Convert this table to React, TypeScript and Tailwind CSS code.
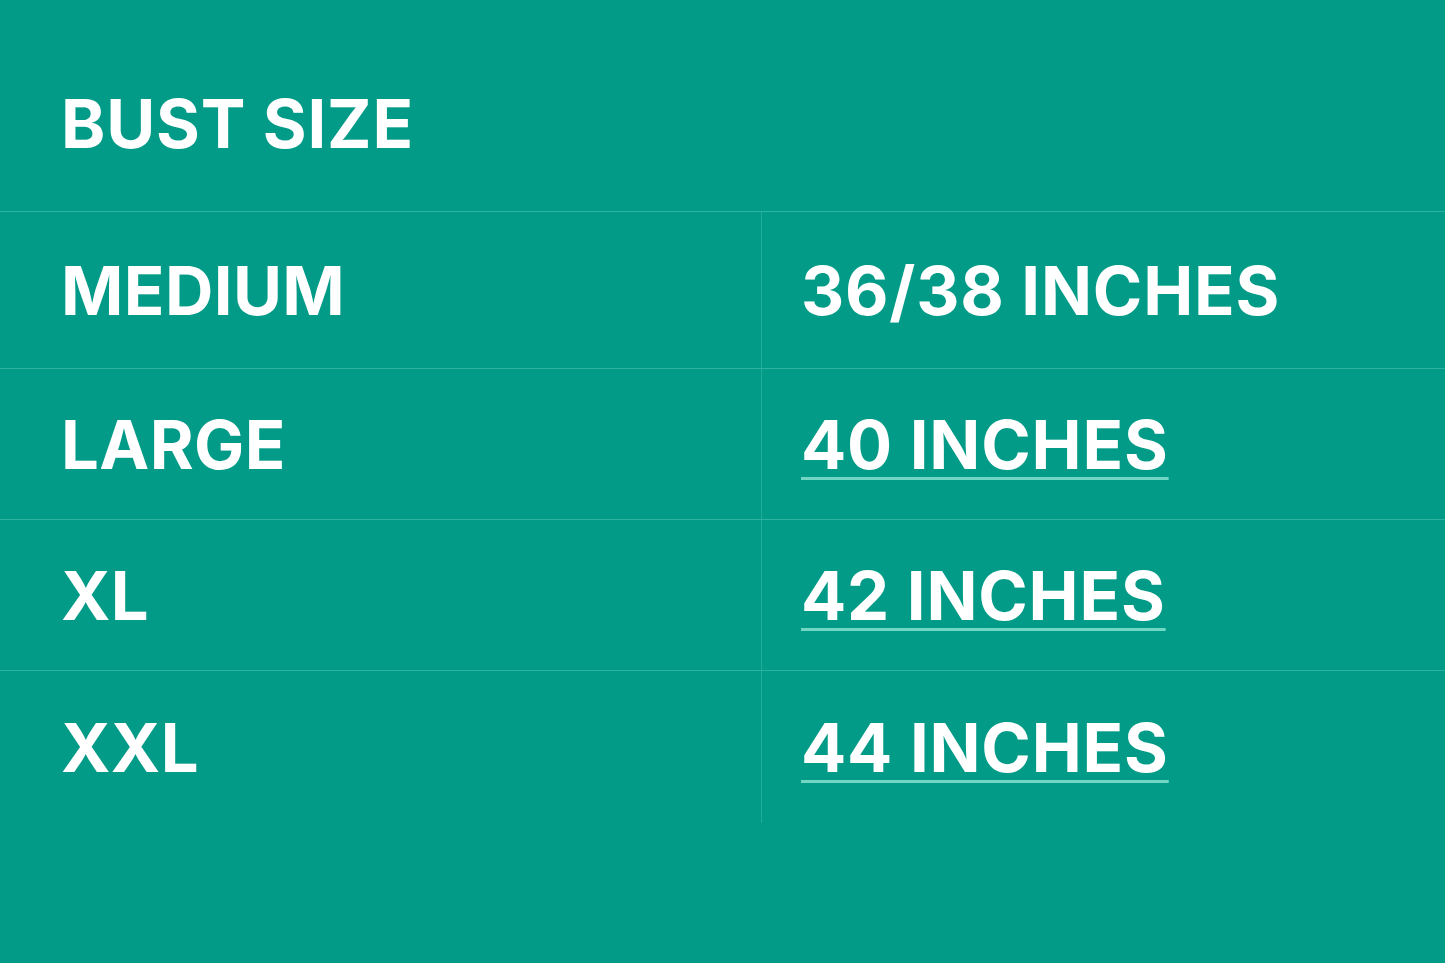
import React from "react";

const rows = [
  { size: "MEDIUM", bust: "36/38 INCHES", link: false, h: "h-[157px]" },
  { size: "LARGE", bust: "40 INCHES", link: true, h: "h-[151px]" },
  { size: "XL", bust: "42 INCHES", link: true, h: "h-[151px]" },
  { size: "XXL", bust: "44 INCHES", link: true, h: "h-[152px]" },
];

const App = () => {
  return (
    <div className="w-[1445px] h-[963px] bg-[#029b87] text-white font-['Inter','Liberation_Sans',sans-serif] font-bold overflow-hidden">
      {/* Title */}
      <div className="h-[211px] flex items-center pl-[61px] pt-[36px]">
        <h1 className="text-[67px] leading-none tracking-[0.8px]">BUST SIZE</h1>
      </div>

      {/* Table */}
      <div className="border-t border-[#2db39f]">
        {rows.map((row, i) => (
          <div
            key={row.size}
            className={`flex ${row.h} ${i < rows.length - 1 ? "border-b border-[#2db39f]" : ""}`}
          >
            <div className="w-[762px] flex items-center pl-[61px] border-r border-[#20ab96]">
              <span className="text-[67px] leading-none tracking-[0.4px]">{row.size}</span>
            </div>
            <div className="flex-1 flex items-center pl-[39px]">
              {row.link ? (
                <a className="text-[67px] leading-none tracking-[0.8px] underline decoration-[#72d6c5] decoration-[3px] underline-offset-[8px] cursor-pointer">
                  {row.bust}
                </a>
              ) : (
                <span className="text-[67px] leading-none tracking-[0.8px]">{row.bust}</span>
              )}
            </div>
          </div>
        ))}
      </div>
    </div>
  );
};

export default App;
